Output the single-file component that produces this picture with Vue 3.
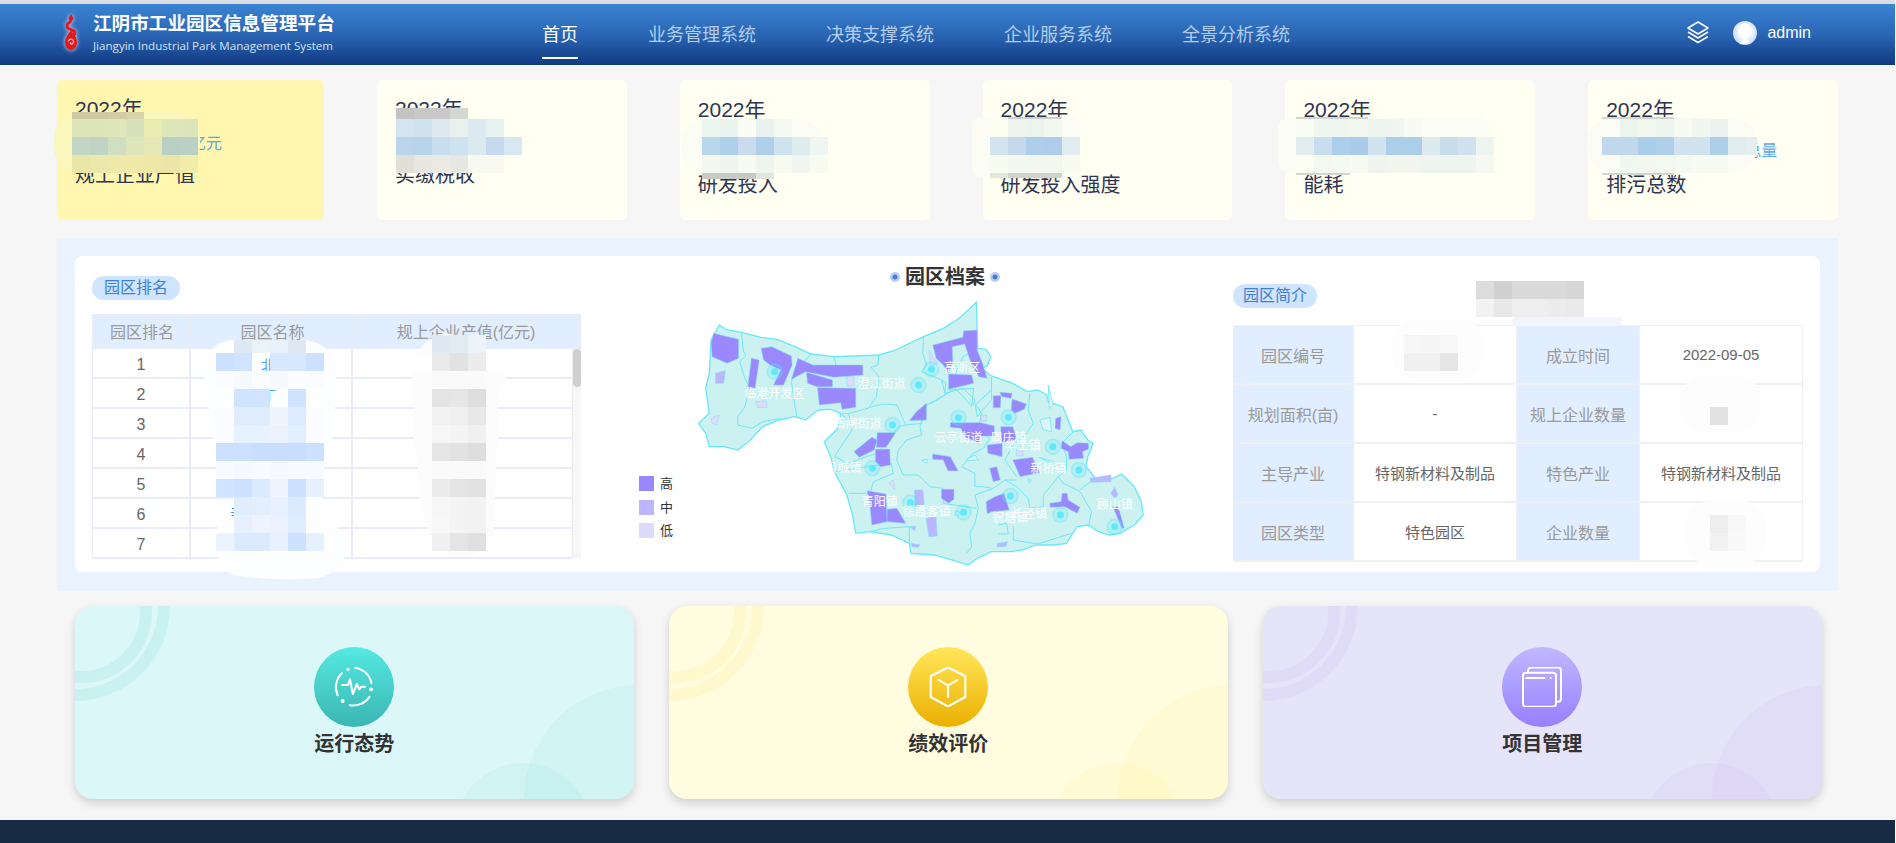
<script setup>
const navItems = ['首页', '业务管理系统', '决策支撑系统', '企业服务系统', '全景分析系统']

const kpiCards = [
  { unit: '亿元', label: '规上企业产值', active: true, tight: true },
  { unit: '', label: '实缴税收', tight: true },
  { unit: '', label: '研发投入' },
  { unit: '', label: '研发投入强度' },
  { unit: '', label: '能耗' },
  { unit: '总量', label: '排污总数', wide: true },
]

const infoRows = [
  ['园区编号', '', '成立时间', '2022-09-05'],
  ['规划面积(亩)', '-', '规上企业数量', ''],
  ['主导产业', '特钢新材料及制品', '特色产业', '特钢新材料及制品'],
  ['园区类型', '特色园区', '企业数量', ''],
]

const entries = [
  { title: '运行态势', tone: 'teal', icon: 'pulse' },
  { title: '绩效评价', tone: 'yellow', icon: 'cube' },
  { title: '项目管理', tone: 'purple', icon: 'book' },
]

// map shapes, traced in the coordinates of a 560x330 crop blown up to 1568x990
const outline = '278,225 300,240 340,247 395,262 440,268 490,290 535,312 600,320 660,318 725,315 765,303 800,285 850,260 905,235 950,205 998,157 1000,240 1002,295 1025,298 1038,320 1030,345 1015,355 1035,375 1060,385 1100,400 1140,425 1170,420 1195,435 1200,455 1240,470 1255,510 1268,545 1290,540 1310,570 1325,580 1310,620 1305,650 1335,690 1370,690 1405,672 1440,710 1460,755 1465,795 1440,825 1400,850 1370,855 1340,845 1310,825 1280,830 1250,880 1215,885 1165,885 1125,900 1095,905 1040,905 1000,925 975,945 945,935 880,915 815,910 810,880 760,855 700,845 660,850 650,790 635,735 620,705 600,665 590,620 572,575 610,535 618,490 590,478 555,480 520,510 490,500 445,510 400,530 365,570 330,600 290,590 250,590 240,550 220,520 250,490 240,415 250,370 255,270'

const borders = [
  '340,247 345,300 352,318 335,335 348,380 362,412 350,470 330,500 330,525 370,535 400,515 450,505',
  '535,312 490,365 480,395 490,470 497,505',
  '600,320 605,348',
  '725,315 722,345 703,352 725,380 718,440 695,475 640,490 618,492 640,510',
  '850,260 848,310 858,345 845,365 890,385 912,398 910,435 880,455 850,470 845,520 800,525 775,465 735,462 700,472',
  '640,490 650,540 600,620 640,640 690,620 720,610 780,530 800,525',
  '600,665 690,650 760,640 765,670 710,695 700,730 640,730',
  '700,845 740,835 810,830 810,880',
  '1002,295 960,320 920,420 990,415 985,470 940,415 910,435',
  '1040,380 1040,420 995,465 1000,500 1040,450 1040,420',
]
const bordersEast = [
  '120,140 125,165 80,180 55,210 50,240 70,285 115,285 150,320 190,325 190,370',
  '185,0 195,40 250,25 285,60 280,75',
  '120,140 140,75 195,45',
  '285,70 305,100 295,145 330,175 310,205 280,220 245,260 285,280 285,320 305,320 340,325 375,300 410,300',
  '450,40 445,90 460,130 440,160 400,195 375,240 410,290',
  '285,345 295,385 285,430 270,460 275,500 260,520',
  '400,440 400,480 460,490 480,490 575,460',
  '375,300 410,320 445,355 450,385 490,380 490,345 535,290 550,310 600,335 635,395 625,440',
  '600,330 625,310 640,300',
  '545,190 580,155 610,150',
  '545,190 560,230 560,270 535,290',
  '285,345 340,325',
  '190,370 290,385',
  '355,435 380,430 385,462 355,462',
]
const lakes = [
  '480,120 510,112 515,155 490,150',
  '125,240 142,238 140,250',
  '260,238 285,225 295,240 262,242',
  '478,232 520,245 515,250',
  '505,15 520,75 508,85',
  '445,296 455,300 448,308',
  '225,395 238,395 235,408 226,405',
]
const high = [
  '262,250 332,268 332,325 300,340 258,320 255,280',
  '368,325 390,330 378,415 358,410',
  '395,295 425,290 480,318 482,345 458,405 430,405 450,360 420,345 402,330',
  '498,325 540,345 680,345 680,375 598,382 520,365 480,388',
  '522,367 595,390 595,410 552,410 525,400',
  '553,413 660,415 660,472 622,478 618,458 558,465',
  '876,285 960,262 962,243 1000,240 1000,300 1015,340 1028,385 1005,380 985,345 965,282 930,290 932,340 920,370 905,345 885,325',
  '920,372 985,375 990,400 920,418',
  '858,460 858,510 810,512 830,485',
  '925,518 1010,518 1048,528 1048,558 1010,558 1005,580 965,560 955,535 925,532',
  '1045,437 1067,437 1065,473 1045,473',
  '1063,427 1098,430 1095,445 1070,440',
  '1098,447 1138,462 1132,478 1105,490 1095,480',
  '1066,530 1100,530 1110,565 1085,580 1068,575',
  '1028,585 1070,580 1070,620 1030,610',
  '1220,505 1235,500 1232,540 1218,535',
  '1238,572 1262,590 1280,578 1312,580 1312,597 1295,605 1298,625 1258,628 1255,605 1235,595',
  '1100,630 1155,622 1175,668 1120,680',
  '1035,655 1055,650 1065,690 1045,695',
  '875,612 925,620 935,640 947,663 918,662 905,630 875,628',
  '720,548 772,548 745,592 718,592',
  '655,605 705,562 720,570 712,600 670,622',
  '715,598 755,597 757,645 730,650 715,635',
  '692,722 745,732 748,815 705,825 700,770',
  '748,778 775,775 800,820 748,815',
  '900,718 935,718 935,748 920,760 900,745',
  '1025,755 1050,740 1075,730 1090,780 1040,785 1028,792',
  '1203,760 1235,755 1238,730 1252,730 1255,750 1288,772 1280,790 1245,770 1205,772',
  '1380,770 1395,770 1412,835 1405,835',
]
const medium = [
  '268,370 295,362 290,400 268,400',
  '825,720 848,720 852,765 825,768',
  '857,805 885,800 888,858 865,860',
  '1316,685 1375,675 1375,695 1318,697',
  '1385,712 1395,735 1385,745 1375,730',
  '812,830 828,828 825,842',
  '1058,880 1085,875 1080,890 1055,890',
  '815,880 840,885 835,892 818,890',
]
const low = [
  '635,380 655,380 655,408 635,408',
  '380,455 410,452 412,472 385,472',
  '255,505 278,495 270,525 258,520',
  '1010,495 1028,495 1025,515 1010,512',
  '1110,600 1128,598 1128,618 1110,618',
  '865,300 888,340 870,350',
  '752,700 765,690 770,720',
]

const cropPoint = ([x, y]) => ({ x: x / 2.8, y: y / 3 })
const ripples = [
  [433, 365], [836, 405], [872, 358], [948, 503], [1088, 502], [763, 525], [1212, 590],
  [707, 655], [1285, 660], [813, 758], [962, 787], [1093, 738], [1233, 795], [1385, 830],
].map(cropPoint)
const mapLabels = [
  ['临港开发区', 432, 432], ['澄江街道', 732, 403], ['高新区', 958, 355], ['南闸街道', 665, 522],
  ['云亭街道', 948, 565], ['周庄镇', 1088, 565], ['华士镇', 1128, 587], ['月城镇', 625, 653],
  ['新桥镇', 1200, 658], ['青阳镇', 727, 755], ['徐霞客镇', 858, 785], ['祝塘镇', 1093, 803],
  ['长泾镇', 1145, 793], ['顾山镇', 1385, 765],
].map(([text, x, y]) => ({ text, ...cropPoint([x, y]) }))

// blurred-out values of the screenshot: each row is [height, ...cell colours]
function mosaic(x, y, rows, cell = 18) {
  const out = []
  let top = y
  for (const [h, ...colors] of rows) {
    colors.forEach((fill, i) => {
      if (fill) out.push({ x: x + i * cell, y: top, w: cell, h, fill })
    })
    top += h
  }
  return out
}

const cells = [
  ...mosaic(72, 112, [
    [7, '#cfc9a2', '#cfc9a2', '#d2cca4', '#d8d2a8'],
    [18, '#dde5b8', '#dce4b8', '#dfe6ba', '#d7e2bd', '#e8ecb0', '#dee6ba', '#dde4ba'],
    [18, '#c2d6c4', '#bfd4c2', '#d0dfbf', '#dde6bb', '#e3e8b6', '#b8cfc4', '#bbd0c5'],
    [18, '#eae6a8', '#ece8ab', '#eee9ab', '#f0e8a6', '#eee6a5', '#ece5a8', '#f2eca9'],
  ]),
  ...mosaic(396, 108, [
    [11, '#c3c3c3', '#c8c8c8', '#c8c8c8', '#d5d7d2'],
    [18, '#d5e5ef', '#d0e3ed', '#dde9ee', '#eaf0ee', '#dde9f0', '#e6f2f0'],
    [18, '#bad5eb', '#b8d4ea', '#c8def0', '#cfe2f0', '#dbe9f0', '#c5d9ef', '#d8e8f0'],
    [18, '#e0e0d8', '#e8e8e2', '#ebebe4', '#e8e8e2', '#f8faf2', '#f8faf2'],
  ]),
  ...mosaic(702, 119, [
    [18, '#ecf4f0', '#eaf3ee', '#f8fcf2', '#e8f1ed', '#f3f8f0'],
    [18, '#b8d6ec', '#aed0ea', '#c8dced', '#aed0ea', '#cde3ee', '#dfecee', '#eff6f2'],
    [18, '#f2f7ef', '#eff5ee', '#f8fbf0', '#eef4ee', '#f8fbf0', '#f1f5ef', '#f8fbf0'],
    [6, '#cacac4', '#cacac4', '#c8c8c2', '#e4e4de'],
  ]),
  ...mosaic(990, 117, [
    [2, '', '#cfcfc9', '#cfcfc9', '#cfcfc9'],
    [18, '#fcfef2', '#eff5ee', '#edf4ee', '#f2f7ef'],
    [18, '#d2e4ee', '#c4daec', '#aecfeb', '#adcdea', '#e0ecee'],
    [18, '#f8fbf0', '#f3f7ee', '#f3f7ee', '#f3f7ee', '#f8fbf0'],
    [5, '#e6e6de', '#d2d2cc', '#d2d2cc', '#d2d2cc'],
  ]),
  ...mosaic(1296, 117, [
    [2, '#d5d5d0', '#d5d5d0', '#d5d5d0', '#d5d5d0'],
    [18, '#f9fcf3', '#f0f6f0', '#eff5ef', '#f2f7f0', '#eef4ee', '#f0f5ef', '#f8fbf2'],
    [18, '#e3edef', '#c8dded', '#abceea', '#a8cce9', '#d0e3ee', '#abcee9', '#abcee9', '#deebee', '#c8dcec', '#cfe1ec', '#ecf5f0'],
    [18, '#fcfef3', '#f3f8f0', '#f5f9f0', '#f8fbf2', '#f0f4ee', '#f2f6ee', '#f3f6ef', '#eff4ee', '#f0f4ee', '#f0f4ee', '#f6f9f2'],
    [2, '#d5d5d0', '#d5d5d0', '#d5d5d0'],
  ]),
  ...mosaic(1602, 117, [
    [2, '#d5d5d0', '#d5d5d0', '#d5d5d0', '#d5d5d0'],
    [18, '', '#ecf4ee', '#f2f7f0', '#eef5ee', '#f8fbf2', '#f0f6f0', '#ecf3ee'],
    [18, '#c0d8ec', '#c0d8ec', '#a9cdea', '#b0d0ea', '#d0e3ee', '#d0e3ee', '#aecfea', '#e0ecee'],
    [18, '', '#f0f6f0', '#f3f7f0', '#f4f8f1', '#f6f9f2', '#f8fbf3', '#f8fbf3'],
    [2, '#d5d5d0', '#d5d5d0', '#d5d5d0', '#d5d5d0'],
  ]),
  ...mosaic(1746, 137, [[18, '#e4eeef']], 11),
  ...mosaic(216, 340, [
    [13, '', '#dfe9f3', '#eaf2fb', '#e9f1fa', '#dfe8f2', ''],
    [18, '#cce0ff', '#d0e3ff', '', '#d6e7fe', '#d6e7fe', '#cce0ff'],
    [18, '#fafcff', '#f6f9fe', '#fafcff', '#f6f9fe', '#fafcff', '#fafcff'],
    [18, '', '#d0e4ff', '#d0e4ff', '', '#cfe3ff', ''],
    [18, '#fbfcff', '#e0edff', '#e0edff', '#eef5ff', '#ddeaff', '#fbfcff'],
    [18, '#fbfcff', '#e8f1fe', '#e8f1fe', '#eaf2fe', '#e3eefe', '#fbfcff'],
    [18, '#cce0ff', '#cce0ff', '#c9deff', '#c9deff', '#c9deff', '#cce0ff'],
    [18, '#f7fafe', '#f5f8fe', '#f7fafe', '#f5f8fe', '#f7fafe', '#f7fafe'],
    [18, '#d0e3ff', '#cde2ff', '#daeaff', '#eef5ff', '#cce1ff', '#e6f0ff'],
    [18, '', '#e0edff', '#e4effe', '#e8f1ff', '#dceaff', ''],
    [18, '', '#e6f0ff', '#eef4fd', '#ecf2fd', '#e0ecff', ''],
    [18, '#eaf3ff', '#dceaff', '#dceaff', '#e8f1ff', '#cee2ff', '#e6f1ff'],
  ]),
  ...mosaic(432, 335, [
    [18, '#e0e8f4', '#e2eaf4', '#eef3fa'],
    [18, '#e9e9e9', '#e2e2e2', '#ececec'],
    [18, '#fafafa', '#fafafa', '#fafafa'],
    [18, '#e4e4e4', '#e6e6e6', '#dedede'],
    [18, '#f2f2f2', '#f0f0f0', '#e8e8e8'],
    [18, '#f6f6f6', '#f4f4f4', '#f0f0f0'],
    [18, '#e6e6e6', '#e2e2e2', '#dedede'],
    [18, '#fafafa', '#fafafa', '#fafafa'],
    [18, '#ececec', '#e4e4e4', '#e2e2e2'],
    [18, '#f6f6f6', '#f4f4f4', '#f2f2f2'],
    [18, '#f8f8f8', '#f4f4f4', '#f2f2f2'],
    [18, '#f0f0f0', '#e4e4e4', '#e0e0e0'],
  ]),
  ...mosaic(1476, 281, [
    [18, '#dcdcdc', '#d0d0d0', '#dadada', '#dadada', '#dadada', '#d6d6d6'],
    [18, '#f2f2f2', '#e8e8e8', '#eeeeee', '#eeeeee', '#ececec', '#eaeaea'],
  ]),
  ...mosaic(1404, 335, [
    [18, '#f6f6f6', '#f5f5f5', '#f8f8f8'],
    [18, '#f0f0f0', '#f0f0f0', '#e6e6e6'],
  ]),
  ...mosaic(1710, 407, [[18, '#e2e2e2']]),
  ...mosaic(1710, 515, [
    [18, '#eeeeee', '#f8f8f8'],
    [18, '#f2f2f2', '#f9f9f9'],
  ]),
]

const patches = [
  { x: 54, y: 112, w: 146, h: 61, rx: 26, fill: '#faf7bd' },
  { x: 681, y: 119, w: 142, h: 54, rx: 24, fill: '#fbfdf4' },
  { x: 972, y: 117, w: 108, h: 60, rx: 8, fill: '#fbfdf4' },
  { x: 1278, y: 117, w: 212, h: 56, rx: 12, fill: '#fbfdf5' },
  { x: 1587, y: 117, w: 170, h: 56, rx: 26, fill: '#fbfdf5' },
  { x: 1392, y: 318, w: 92, h: 62, rx: 26, fill: '#fdfdfd' },
  { x: 1512, y: 317, w: 110, h: 9, rx: 4, fill: '#f1f6fd' },
  { x: 1680, y: 375, w: 82, h: 58, rx: 26, fill: '#fdfdfd' },
  { x: 1685, y: 500, w: 82, h: 66, rx: 28, fill: '#fdfdfd' },
]

const peeks = [
  { text: '北', x: 268, y: 370 },
  { text: '丁', x: 269, y: 400 },
  { text: '月', x: 232, y: 490 },
  { text: '辛', x: 237, y: 518 },
]
</script>

<template>
  <div class="page">
    <div class="top-line" />
    <header class="header">
      <div class="brand">
        <svg class="logo" viewBox="0 0 16 38" width="16" height="37">
          <path d="M8 0L10.600 4.500L8 9L5.400 4.500Z" fill="#e3181c" />
          <path d="M8 7C2.500 11 2.500 14 8 16C13.500 18 13.500 21 8 23" fill="none" stroke="#e3181c" stroke-width="3" />
          <path d="M8 17C1.500 24 .5 30 3.500 34.500C6 38 10 38 12.500 34.500C15.500 30 14.500 24 8 17Z" fill="#e3181c" />
          <path d="M5 28C7 24 11 26 10.500 29C10 32 6.500 31 7.500 29" fill="none" stroke="#f7c9c9" stroke-width="1.200" />
        </svg>
        <div>
          <div class="brand-title">江阴市工业园区信息管理平台</div>
          <div class="brand-sub">Jiangyin Industrial Park Management System</div>
        </div>
      </div>
      <nav class="nav">
        <a v-for="(item, i) in navItems" :key="item" class="nav-item" :class="{ active: i === 0 }">{{ item }}</a>
      </nav>
      <div class="actions">
        <svg class="stack" viewBox="0 0 24 23" width="24" height="23" fill="none" stroke="#fff" stroke-width="1.500" stroke-linejoin="round">
          <path d="M12 1L22 7L12 13L2 7Z" />
          <path d="M2 11L12 17L22 11" />
          <path d="M2 15.500L12 21.500L22 15.500" />
        </svg>
        <svg class="avatar" viewBox="0 0 24 24" width="24" height="24">
          <defs>
            <radialGradient id="avatarBg" cx="50%" cy="45%" r="55%">
              <stop offset="55%" stop-color="#eef4fe" />
              <stop offset="100%" stop-color="#c4d6f6" />
            </radialGradient>
          </defs>
          <circle cx="12" cy="12" r="12" fill="url(#avatarBg)" />
          <ellipse cx="12" cy="10" rx="6.500" ry="7.500" fill="#fff" />
          <path d="M7 23C8 19 10 18 12 18C14 18 16 19 17 23Z" fill="#fff" />
        </svg>
        <span class="user">admin</span>
      </div>
    </header>

    <section class="kpis">
      <div v-for="card in kpiCards" :key="card.label" class="kpi" :class="{ active: card.active, tight: card.tight, first: card.active }">
        <div class="kpi-year">2022年</div>
        <div class="kpi-value" :class="{ far: card.wide }">{{ card.unit }}</div>
        <div class="kpi-label">{{ card.label }}</div>
      </div>
    </section>

    <section class="panel">
      <div class="panel-body">
        <div class="col-rank">
          <span class="pill">园区排名</span>
          <div class="rank-head">
            <div>园区排名</div>
            <div>园区名称</div>
            <div class="rank-head-last">规上企业产值(亿元)</div>
          </div>
          <div class="rank-body">
            <div class="rank-rows">
              <div v-for="n in 7" :key="n" class="rank-row">
                <div>{{ n }}</div>
                <div />
                <div />
              </div>
            </div>
            <div class="scroll"><div class="scroll-thumb" /></div>
          </div>
        </div>

        <div class="col-map">
          <h2 class="map-title"><i class="orb" />园区档案<i class="orb" /></h2>
          <svg class="map" viewBox="0 0 560 330" width="560" height="330">
            <g transform="scale(0.35714 0.33333)">
              <polygon :points="outline" class="land" />
              <polyline v-for="line in borders" :key="line" :points="line" class="border" />
              <g transform="translate(728 390) scale(0.933 1)">
                <polyline v-for="line in bordersEast" :key="line" :points="line" class="border" />
                <polygon v-for="p in lakes" :key="p" :points="p" class="lake" />
              </g>
              <polygon v-for="p in low" :key="p" :points="p" class="park low" />
              <polygon v-for="p in medium" :key="p" :points="p" class="park medium" />
              <polygon v-for="p in high" :key="p" :points="p" class="park high" />
            </g>
            <g v-for="r in ripples" :key="`${r.x}-${r.y}`">
              <circle :cx="r.x" :cy="r.y" r="7.500" class="ripple" />
              <circle :cx="r.x" :cy="r.y" r="3.400" class="ripple-dot" />
            </g>
            <text v-for="l in mapLabels" :key="l.text" :x="l.x" :y="l.y" class="map-label">{{ l.text }}</text>
          </svg>
          <ul class="legend">
            <li><i class="swatch high-bg" />高</li>
            <li><i class="swatch medium-bg" />中</li>
            <li><i class="swatch low-bg" />低</li>
          </ul>
        </div>

        <div class="col-info">
          <span class="pill pill-info">园区简介</span>
          <div class="info-table">
            <template v-for="row in infoRows" :key="row[0]">
              <div class="info-key">{{ row[0] }}</div>
              <div class="info-val">{{ row[1] }}</div>
              <div class="info-key">{{ row[2] }}</div>
              <div class="info-val">{{ row[3] }}</div>
            </template>
          </div>
        </div>
      </div>
    </section>

    <section class="entries">
      <div v-for="e in entries" :key="e.title" class="entry" :class="e.tone">
        <i class="ring" />
        <i class="blob big" />
        <i class="blob small" />
        <div class="entry-icon">
          <svg viewBox="0 0 40 40" width="40" height="40" fill="none" stroke="#fff" stroke-width="2" stroke-linecap="round" stroke-linejoin="round">
            <template v-if="e.icon === 'pulse'">
              <path d="M21.200 0.700A19.400 19.400 0 0 1 37.500 16.300" />
              <path d="M7.800 6.300A19.400 19.400 0 0 0 3.700 28.300" />
              <path d="M16 38.300A19.400 19.400 0 0 0 35.500 29.700" />
              <circle cx="14" cy="2.300" r="1.600" fill="#fff" stroke="none" />
              <circle cx="37" cy="22.300" r="1.900" fill="#fff" stroke="none" />
              <circle cx="8.600" cy="34" r="2" fill="#fff" stroke="none" />
              <path d="M8.200 18H14L16 12.300L18.800 27L22.900 17L25.300 22.300L27.300 19.700H31" />
            </template>
            <template v-else-if="e.icon === 'cube'">
              <path d="M20 0.500L37.300 9V30L20 39.500L2.700 30V9Z" />
              <path d="M11 13L20 18.500L29.400 13M20 18.500V30" />
            </template>
            <template v-else>
              <path d="M6 5.700V3.800C6 2 7.500.5 9.300.5H36C37.800.5 39 1.800 39 3.500V31.500C39 33.500 37.800 34.700 36 34.700H34" />
              <rect x="1" y="5.700" width="33" height="34" rx="3" />
              <path d="M4.400 11H22.500" />
              <circle cx="28.600" cy="11" r="1" fill="#fff" stroke="none" />
            </template>
          </svg>
        </div>
        <div class="entry-title">{{ e.title }}</div>
      </div>
    </section>

    <footer class="footer" />

    <svg class="redactions" viewBox="0 0 1895 843" width="1895" height="843">
      <rect v-for="(p, i) in patches" :key="`p${i}`" :x="p.x" :y="p.y" :width="p.w" :height="p.h" :rx="p.rx" :fill="p.fill" />
      <g transform="translate(50 240) scale(0.3827 0.33333)">
        <path fill="#fdfefe" d="M415 340Q440 300 480 300Q540 300 558 345L578 345Q620 295 670 300Q715 310 730 340L748 395L745 510L735 610L716 665L712 770L695 830Q740 830 775 900Q780 990 700 1015Q600 1025 480 1005Q425 970 430 880Q440 840 500 815L465 745L435 660L418 520L402 445L402 395Z" />
        <path fill="#fcfcfc" d="M958 340Q990 285 1035 280Q1090 290 1105 350L1140 355L1140 393L1190 395L1192 447L1172 447L1172 610L1165 665L1165 715L1160 880L1120 935Q1075 965 1030 935L990 880L965 770L960 715L960 665L950 610L950 500L945 447L945 395L998 393L998 355Z" />
      </g>
      <text v-for="t in peeks" :key="t.text" :x="t.x" :y="t.y" class="peek">{{ t.text }}</text>
      <rect v-for="(c, i) in cells" :key="i" :x="c.x" :y="c.y" :width="c.w" :height="c.h" :fill="c.fill" shape-rendering="crispEdges" />
    </svg>
  </div>
</template>

<style>
html, body { margin: 0; background: #f7f7f7; }
</style>

<style scoped>
.page {
  position: relative;
  display: flex;
  flex-direction: column;
  width: 1895px;
  height: 843px;
  overflow: hidden;
  background: #f6f6f7;
  font-family: "Liberation Sans", "Noto Sans CJK SC", sans-serif;
}
.top-line { height: 4px; background: #dadde1; }

.header {
  display: flex;
  height: 61px;
  color: #fff;
  background: linear-gradient(180deg, #3a84d3 0%, #2a66b4 50%, #113a82 100%);
}
.brand {
  display: flex;
  align-items: center;
  gap: 14px;
  width: 542px;
  padding-left: 63px;
  box-sizing: border-box;
  height: 56px;
  flex-shrink: 0;
}
.logo { filter: drop-shadow(0 0 2px rgba(255, 255, 255, 0.85)); }
.brand-title { font-size: 18.600px; font-weight: 700; line-height: 26px; white-space: nowrap; }
.brand-sub {
  font-family: "Open Sans", sans-serif;
  font-size: 11.600px;
  line-height: 16px;
  color: #d3e2f5;
  white-space: nowrap;
  margin-top: 1px;
}
.nav { display: flex; align-items: flex-start; gap: 70px; }
.nav-item {
  padding: 18px 0 9px;
  font-size: 18px;
  line-height: 26px;
  color: #b4cdea;
  border-bottom: 2px solid transparent;
}
.nav-item.active { color: #fff; border-bottom-color: #fff; }
.actions {
  display: flex;
  align-items: center;
  margin-left: auto;
  padding: 0 84px 4px 0;
}
.avatar { margin-left: 23px; margin-right: 10px; }
.user { font-size: 16px; }

.kpis { display: flex; gap: 53px; padding: 15px 57px 0; }
.kpi {
  flex: 1;
  height: 140px;
  padding: 16px 18px 0;
  box-sizing: border-box;
  border-radius: 6px;
  background: #fffff2;
  color: #2e3452;
}
.kpi.first { flex: none; width: 267px; }
.kpi.active { background: #fff6b0; }
.kpi-year { font-size: 21px; line-height: 28px; }
.kpi-value {
  height: 34px;
  margin-top: 10px;
  padding-left: 115px;
  font-size: 16px;
  line-height: 34px;
  color: #5ba6ea;
}
.kpi-value.far { padding-left: 139px; }
.kpi-label { margin-top: 3px; font-size: 20px; line-height: 28px; }
.kpi.tight { padding-top: 15px; }
.kpi.tight .kpi-value { margin-top: 4px; }
.kpi.tight .kpi-label { margin-top: 0; }

.panel {
  margin: 18px 57px 0;
  padding: 18px;
  height: 353px;
  box-sizing: border-box;
  background: #eaf3fd;
}
.panel-body {
  display: flex;
  height: 316px;
  padding-left: 17px;
  box-sizing: border-box;
  border-radius: 8px;
  background: #fff;
}
.pill {
  display: block;
  width: 64px;
  padding: 0 12px;
  font-size: 16px;
  line-height: 24px;
  border-radius: 12px;
  color: #3d7fd8;
  background: #cfe5ff;
}
.pill-info { padding: 0 10px; }

.col-rank { flex: none; width: 489px; padding-top: 20px; box-sizing: border-box; }
.rank-head {
  display: grid;
  grid-template-columns: 96px 163px 230px;
  height: 35px;
  margin-top: 14px;
  box-sizing: border-box;
  border: 2px solid #e8ecf6;
  background: #e1eeff;
  color: #999;
  font-size: 16px;
  line-height: 33px;
  text-align: center;
}
.rank-head > div + div { border-left: 2px solid #e8ecf6; }
.rank-head-last { padding-right: 6px; }
.rank-body { display: flex; height: 209px; }
.rank-rows { flex: 1; border-left: 1px solid #e8ecf6; }
.rank-row {
  display: grid;
  grid-template-columns: 96px 162px 1fr;
  height: 30px;
  box-sizing: border-box;
  border-bottom: 2px solid #e8ecf6;
  color: #666;
  font-size: 16px;
  line-height: 31px;
  text-align: center;
}
.rank-row > div + div { border-left: 2px solid #e8ecf6; }
.scroll { width: 9px; background: #f6f6f6; border-left: 1px solid #ececec; box-sizing: border-box; }
.scroll-thumb { height: 38px; border-radius: 4px; background: #cfcfcf; }

.col-map { position: relative; flex: none; width: 652px; }
.map-title {
  display: flex;
  align-items: center;
  gap: 5px;
  margin: 7px 0 0;
  padding-left: 309px;
  font-size: 20px;
  font-weight: 700;
  line-height: 28px;
  color: #333;
}
.orb {
  width: 10px;
  height: 10px;
  border-radius: 50%;
  background: radial-gradient(circle, #4a7ccd 0 30%, #b6cdf0 40% 100%);
}
.map { position: absolute; left: 39px; top: -6px; }
.land { fill: #cbf1f0; stroke: #66e8f8; stroke-width: 1.300; vector-effect: non-scaling-stroke; }
.border { fill: none; stroke: #6ee9f8; stroke-width: 1; vector-effect: non-scaling-stroke; }
.lake { fill: #dcf5f7; stroke: #66e8f8; stroke-width: 0.800; vector-effect: non-scaling-stroke; }
.park { stroke: #7fdcf9; stroke-width: 0.500; vector-effect: non-scaling-stroke; }
.high { fill: #9a88ff; }
.medium { fill: #bcb5ff; }
.low { fill: #dedafb; }
.ripple { fill: rgba(86, 232, 251, 0.2); stroke: rgba(86, 232, 251, 0.35); stroke-width: 1.500; }
.ripple-dot { fill: #5eeafc; }
.map-label {
  fill: #fff;
  font-size: 12px;
  text-anchor: middle;
  dominant-baseline: central;
}
.legend {
  position: absolute;
  left: 58px;
  top: 220px;
  margin: 0;
  padding: 0;
  list-style: none;
  font-size: 13px;
  line-height: 15px;
  color: #333;
}
.legend li { display: flex; gap: 6px; height: 15px; margin-bottom: 8.500px; }
.swatch { width: 15px; height: 15px; }
.high-bg { background: #9a88ff; }
.medium-bg { background: #bcb5ff; }
.low-bg { background: #dedafb; }

.col-info { flex: none; width: 570px; padding-top: 28px; box-sizing: border-box; }
.info-table {
  display: grid;
  grid-template-columns: 120px 164px 122px 164px;
  grid-auto-rows: 59px;
  margin-top: 17px;
  border-top: 1px solid #eef0f3;
  box-sizing: border-box;
}
.info-key, .info-val {
  display: flex;
  align-items: center;
  justify-content: center;
  box-sizing: border-box;
  border-bottom: 2px solid #eef0f3;
}
.info-key { background: #e1eeff; color: #999; font-size: 16px; }
.info-val { color: #666; font-size: 15px; border-left: 1px solid #eef0f3; border-right: 1px solid #eef0f3; }

.entries { display: flex; gap: 35.500px; padding: 15px 0 0 75px; }
.entry {
  position: relative;
  display: flex;
  flex-direction: column;
  align-items: center;
  width: 558.500px;
  height: 193px;
  padding-top: 41px;
  box-sizing: border-box;
  overflow: hidden;
  border-radius: 18px;
  box-shadow: 0 4px 10px rgba(0, 0, 0, 0.16);
}
.entry.teal { background: #dcf7f8; --deco: #c9f1f1; --soft: rgba(90, 205, 205, 0.08); }
.entry.yellow { background: #fffcdf; --deco: #fff8cc; --soft: rgba(255, 240, 130, 0.12); }
.entry.purple { background: #e6e4f9; --deco: #e0dcf8; --soft: rgba(190, 170, 240, 0.1); }
.ring {
  position: absolute;
  left: -95px;
  top: -95px;
  width: 190px;
  height: 190px;
  box-sizing: border-box;
  border-radius: 50%;
  border: 12px solid var(--deco);
}
.ring::after {
  content: '';
  position: absolute;
  left: 18px;
  top: 18px;
  width: 142px;
  height: 142px;
  box-sizing: border-box;
  border-radius: 50%;
  border: 12px solid var(--deco);
}
.blob { position: absolute; border-radius: 50%; background: var(--soft); }
.blob.big { left: 449px; top: 79px; width: 228px; height: 228px; }
.blob.small { left: 380px; top: 157px; width: 136px; height: 136px; }
.entry-icon {
  position: relative;
  display: flex;
  align-items: center;
  justify-content: center;
  width: 80px;
  height: 80px;
  border-radius: 50%;
}
.teal .entry-icon { background: linear-gradient(180deg, #55e9e2, #3bb6b3); }
.yellow .entry-icon { background: linear-gradient(180deg, #ffe75a, #ebb000); }
.purple .entry-icon { background: linear-gradient(180deg, #c0b8ff, #9780ff); }
.entry-title {
  position: relative;
  margin-top: 3px;
  font-size: 20px;
  font-weight: 700;
  line-height: 28px;
  color: #333;
}

.footer { height: 23px; margin-top: auto; background: #182b45; }

.redactions { position: absolute; left: 0; top: 0; pointer-events: none; }
.peek { fill: #409eff; font-size: 14px; text-anchor: middle; }
</style>
